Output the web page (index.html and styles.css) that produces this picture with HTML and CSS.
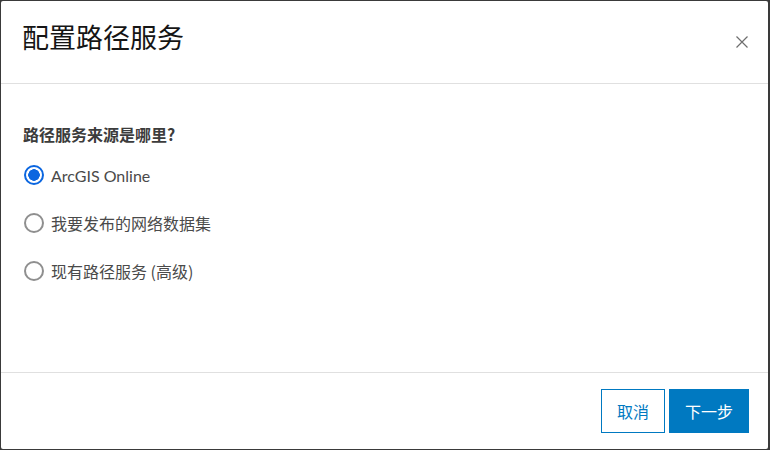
FILE: index.html
```html
<!DOCTYPE html>
<html lang="zh">
<head>
<meta charset="utf-8">
<link rel="stylesheet" href="styles.css">
</head>
<body>
<div class="dialog">
  <div class="header">
    <h1 class="title">配置路径服务</h1>
    <button class="close" aria-label="关闭">
      <svg width="14" height="14" viewBox="0 0 14 14"><path d="M1.5 1.5 L12.5 12.5 M12.5 1.5 L1.5 12.5" stroke="#6e6e6e" stroke-width="1.2" fill="none"/></svg>
    </button>
  </div>
  <div class="content">
    <div class="question">路径服务来源是哪里?</div>
    <div class="options">
      <label class="option"><span class="radio checked"></span><span class="label latin">ArcGIS Online</span></label>
      <label class="option"><span class="radio"></span><span class="label">我要发布的网络数据集</span></label>
      <label class="option"><span class="radio"></span><span class="label">现有路径服务 (高级)</span></label>
    </div>
  </div>
  <div class="footer">
    <button class="btn btn-outline">取消</button>
    <button class="btn btn-primary">下一步</button>
  </div>
</div>
</body>
</html>
```
FILE: styles.css
```css
html, body {
  margin: 0;
  padding: 0;
  width: 770px;
  height: 450px;
  background: #3a3a3a;
  overflow: hidden;
}
body {
  padding: 1px 0 0 1px;
  box-sizing: border-box;
  font-family: "Noto Sans CJK SC", "Noto Sans", sans-serif;
}
.dialog {
  width: 767px;
  height: 448px;
  background: #fff;
  border-radius: 2px;
  display: flex;
  flex-direction: column;
}
.header {
  height: 82px;
  border-bottom: 1px solid #e0e0e0;
  display: flex;
  align-items: center;
  justify-content: space-between;
  padding: 0 19px 0 21px;
  flex: none;
}
.title {
  margin: 0;
  font-size: 27px;
  font-weight: 400;
  color: #151515;
  line-height: 1;
  margin-top: -12px;
}
.close {
  border: 0;
  background: transparent;
  padding: 0;
  width: 14px;
  height: 14px;
  display: flex;
}
.content {
  flex: 1;
  padding: 40px 22px 0 22px;
}
.question {
  font-size: 16px;
  font-weight: 700;
  color: #3c3c3c;
  line-height: 20px;
}
.options {
  margin-top: 7px;
  display: flex;
  flex-direction: column;
}
.option {
  display: flex;
  align-items: center;
  height: 48px;
  gap: 7px;
}
.radio {
  width: 20px;
  height: 20px;
  border-radius: 50%;
  border: 2px solid #8f8f8f;
  box-sizing: border-box;
  margin-left: 1px;
  flex: none;
}
.radio.checked {
  border: 2px solid #0b66e0;
  background: radial-gradient(circle, #0b66e0 0 5.5px, #fff 6px);
}
.label {
  font-size: 16px;
  color: #4a4a4a;
}
.label.latin {
  font-family: "Lato", "Noto Sans CJK SC", sans-serif;
  font-size: 16px;
}
.footer {
  border-top: 1px solid #e0e0e0;
  height: 76px;
  flex: none;
  display: flex;
  justify-content: flex-end;
  align-items: center;
  gap: 4px;
  padding-right: 19px;
}
.btn {
  font-family: "Noto Sans CJK SC", sans-serif;
  font-size: 16px;
  height: 44px;
  box-sizing: border-box;
  cursor: pointer;
  padding: 0;
}
.btn-outline {
  width: 64px;
  background: #fff;
  color: #0079c1;
  border: 1px solid #0079c1;
}
.btn-primary {
  width: 80px;
  background: #0079c1;
  color: #fff;
  border: 1px solid #0079c1;
}
```
